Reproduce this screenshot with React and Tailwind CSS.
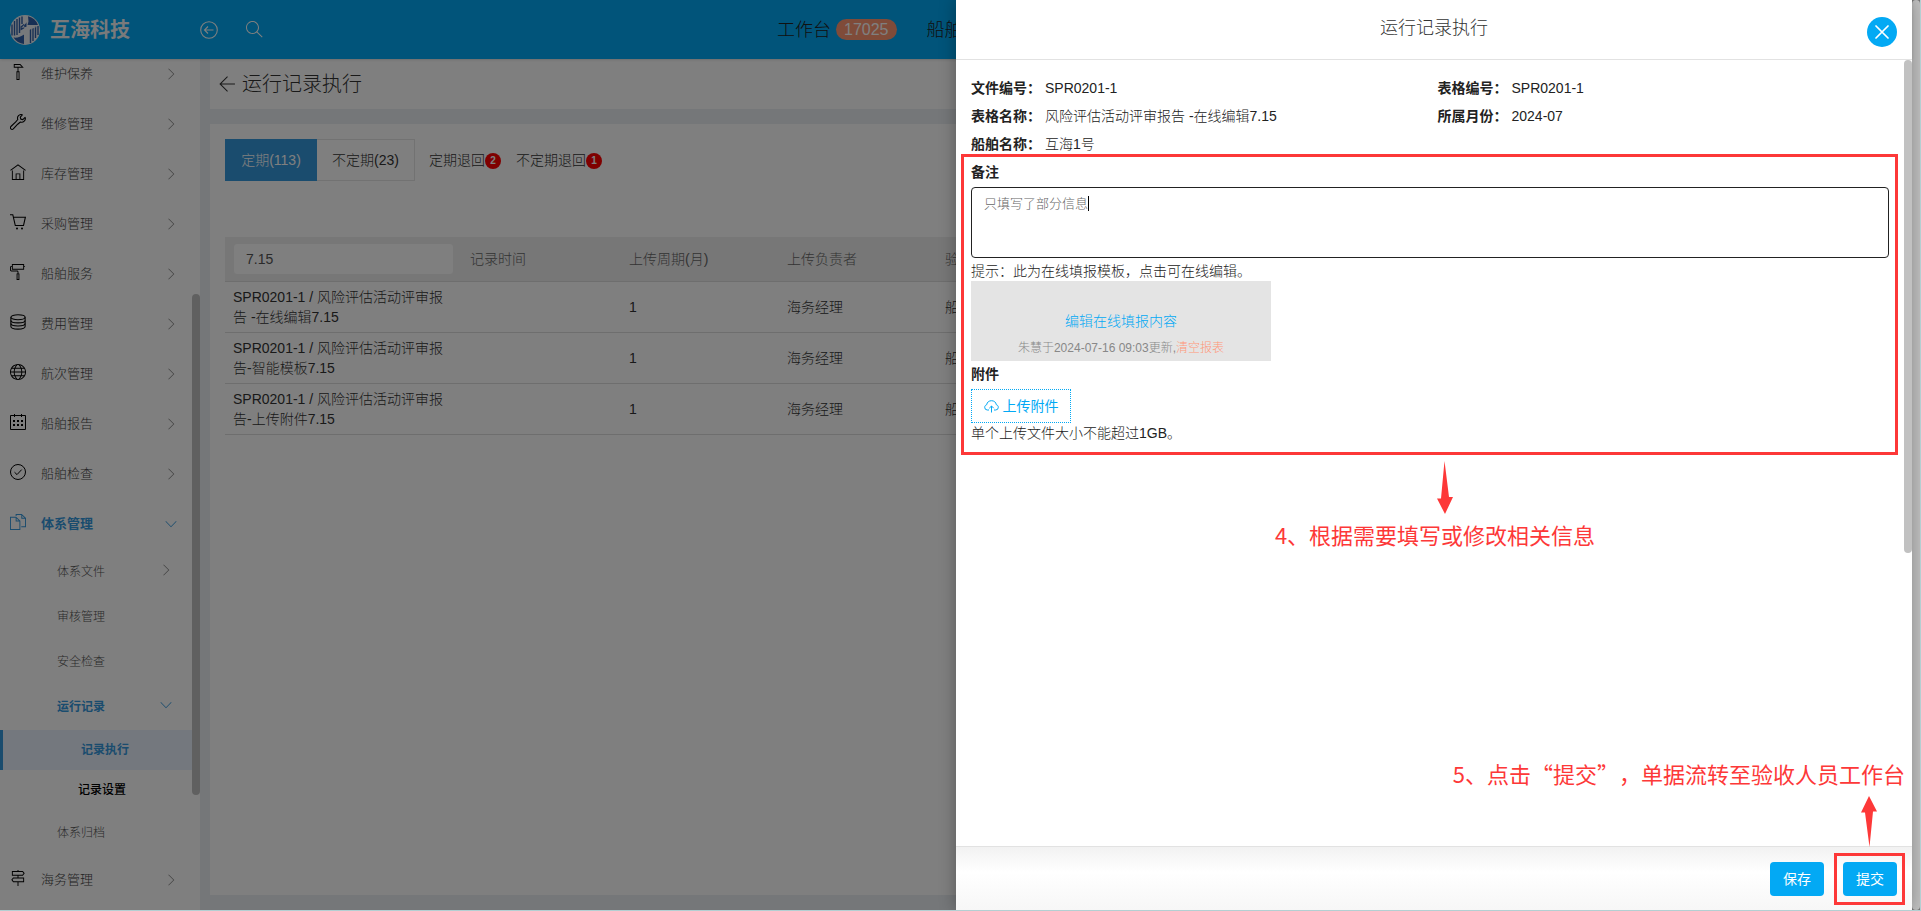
import {
  TfiAngleDown,
  TfiAngleRight,
  TfiArrowLeft,
  TfiDirectionAlt,
  TfiFiles,
  TfiHome,
  TfiHummer,
  TfiPaintRoller,
  TfiSearch,
  TfiWorld,
} from 'react-icons/tfi'

function CollapseIcon({ className }) {
  return (
    <svg className={className} viewBox="0 0 18 18" fill="none" stroke="currentColor" strokeWidth="1.1">
      <circle cx="9" cy="9" r="8.300" />
      <path d="M13.500 9h-9M8 5.500 4.500 9 8 12.500" />
    </svg>
  )
}

function WrenchIcon({ className }) {
  return (
    <svg className={className} viewBox="0 0 16 16" fill="none" stroke="currentColor" strokeWidth="1.1" strokeLinejoin="round">
      <path d="M12.300.8C11 .3 9.500.7 8.500 1.700c-1 1-1.200 2.500-.7 3.800L5.500 8.200.9 12.500c-.6.7-.6 1.700 0 2.400.7.700 1.700.7 2.400 0l4.400-4.700 2.700-2.200c1.300.5 2.800.2 3.800-.8 1-1 1.400-2.500.9-3.800l-2.300 2.200-2-.5-.5-2Z" />
    </svg>
  )
}

function CartIcon({ className }) {
  return (
    <svg className={className} viewBox="0 0 16 16" fill="none" stroke="currentColor" strokeWidth="1.1">
      <path d="M0 .7h2.800L5.300 11.500h8.200L15.400 3.200H3.500" />
      <circle cx="7" cy="14.500" r="1" fill="currentColor" stroke="none" />
      <circle cx="12" cy="14.500" r="1" fill="currentColor" stroke="none" />
    </svg>
  )
}

function CoinsIcon({ className }) {
  return (
    <svg className={className} viewBox="0 0 18 18" fill="none" stroke="currentColor" strokeWidth="1.2">
      <ellipse cx="9" cy="3.600" rx="8" ry="2.800" />
      <path d="M1 3.600v10.500c0 1.600 3.600 2.900 8 2.900s8-1.300 8-2.900V3.600" />
      <path d="M1 7.200C1 8.800 4.600 10 9 10s8-1.200 8-2.800M1 10.700c0 1.600 3.600 2.800 8 2.800s8-1.200 8-2.800" />
    </svg>
  )
}

function CalendarIcon({ className }) {
  return (
    <svg className={className} viewBox="0 0 16 16" fill="none" stroke="currentColor" strokeWidth="1">
      <path d="M.5 1.500h15v14H.5ZM4.500 0v3M11.500 0v3" />
      <path d="M3 7h2M7 7h2M11 7h2M3 11h2M7 11h2M11 11h2" strokeWidth="2" />
    </svg>
  )
}

function CheckCircleIcon({ className }) {
  return (
    <svg className={className} viewBox="0 0 16 16" fill="none" stroke="currentColor" strokeWidth="1">
      <circle cx="8" cy="8" r="7.500" />
      <path d="m4.500 8.200 2.500 2.400 4.700-5" />
    </svg>
  )
}

function CloudUploadIcon({ className }) {
  return (
    <svg className={className} viewBox="0 0 15 14" fill="none" stroke="currentColor" strokeWidth="1">
      <path d="M5 10.500H3.300A2.700 2.700 0 0 1 .7 7.800c0-1.300.9-2.300 2-2.600C3 2.700 5 1.200 7.500 1.200s4.500 1.500 4.800 4c1.200.3 2 1.300 2 2.600a2.700 2.700 0 0 1-2.600 2.700H10" />
      <path d="M7.500 13V6.500M5.300 8.700l2.200-2.200 2.200 2.200" />
    </svg>
  )
}

function Logo() {
  return (
    <svg className="size-[30px]" viewBox="0 0 30 30">
      <circle cx="15" cy="15" r="15" fill="#eef2f6" />
      <path d="M18 1.300A14 14 0 0 1 28 10H17.500l1-3.500L18 1.300Z" fill="#2f5fa8" />
      <path d="M14 28.900A14 14 0 0 1 3.500 22.500C7 23 11 22 14 19.500v9.400Z" fill="#2f5fa8" />
      <path d="M10.500 11.500 16.500 7v5l-6 3.500Z" fill="#2f5fa8" />
      <path
        d="M2 9.500v11M4.500 6v14.500M7 4v16M9.500 2.500V18M12 1.500V9M20.500 13v15M23 12v14M25.500 11.500V23M28 11v9"
        stroke="#2f5fa8"
        strokeWidth="1.400"
      />
      <path d="M13.500 1.500h3.200v6l-5.500 5.500 6.300-1.500h10L19 15l-3.500 4v9.500h-1V19l-6 1.500 6-5Z" fill="#eef2f6" />
    </svg>
  )
}

const MENU = [
  { label: '维护保养', icon: TfiHummer },
  { label: '维修管理', icon: WrenchIcon },
  { label: '库存管理', icon: TfiHome },
  { label: '采购管理', icon: CartIcon },
  { label: '船舶服务', icon: TfiPaintRoller },
  { label: '费用管理', icon: CoinsIcon },
  { label: '航次管理', icon: TfiWorld },
  { label: '船舶报告', icon: CalendarIcon },
  { label: '船舶检查', icon: CheckCircleIcon },
  { label: '体系管理', icon: TfiFiles, open: true },
]

const ROWS = [
  { id: 1, name: 'SPR0201-1 / 风险评估活动评审报告 -在线编辑7.15' },
  { id: 2, name: 'SPR0201-1 / 风险评估活动评审报告-智能模板7.15' },
  { id: 3, name: 'SPR0201-1 / 风险评估活动评审报告-上传附件7.15' },
]

const DETAILS = [
  { label: '文件编号：', value: 'SPR0201-1' },
  { label: '表格编号：', value: 'SPR0201-1' },
  { label: '表格名称：', value: '风险评估活动评审报告 -在线编辑7.15' },
  { label: '所属月份：', value: '2024-07' },
  { label: '船舶名称：', value: '互海1号' },
]

function MenuItem({ label, icon: Icon, open }) {
  return (
    <a
      href="#"
      className={`flex h-[50px] items-center pl-[10px] pr-[15px] text-[13px] ${open ? 'font-bold text-[#3598dc]' : 'text-[#444]'}`}
    >
      <Icon className={`mb-1 size-4 ${open ? '' : 'text-black'}`} />
      <span className="ml-[15px] flex-1">{label}</span>
      {open ? <TfiAngleDown className="size-3" /> : <TfiAngleRight className="size-3 text-[#888]" />}
    </a>
  )
}

function SubItem({ label, children, active }) {
  return (
    <a
      href="#"
      className={`flex h-[45px] items-center pl-[57px] pr-5 text-xs ${active ? 'font-bold text-[#3598dc]' : 'text-[#555]'}`}
    >
      <span className="flex-1">{label}</span>
      {children}
    </a>
  )
}

function Sidebar() {
  return (
    <aside className="flex w-[200px] shrink-0 overflow-hidden bg-white">
      <nav className="-mt-[10px] flex-1">
        {MENU.map((item) => (
          <MenuItem key={item.label} {...item} />
        ))}
        <SubItem label="体系文件">
          <TfiAngleRight className="mb-1 size-3 text-[#888]" />
        </SubItem>
        <SubItem label="审核管理" />
        <SubItem label="安全检查" />
        <SubItem label="运行记录" active>
          <TfiAngleDown className="mb-1 size-3" />
        </SubItem>
        <div className="mt-px">
          <a href="#" className="flex h-10 items-center border-l-3 border-[#3598dc] bg-[#e8f0fc] pl-[78px] text-xs font-bold text-[#3598dc]">
            记录执行
          </a>
          <a href="#" className="flex h-10 items-center pl-[78px] text-xs font-medium text-black">
            记录设置
          </a>
        </div>
        <SubItem label="体系归档" />
        <MenuItem label="海务管理" icon={TfiDirectionAlt} />
      </nav>
      <div className="w-2 pt-[235px]">
        <div className="h-[501px] rounded-full bg-[#c1c1c1]" />
      </div>
    </aside>
  )
}

function Header() {
  return (
    <header className="z-10 flex h-[59px] shrink-0 items-center overflow-hidden bg-[#03a9f4] shadow">
      <div className="flex w-[200px] shrink-0 items-center gap-[10px] pl-[10px]">
        <Logo />
        <span className="text-xl font-bold text-[#f2f4f6]">互海科技</span>
      </div>
      <button type="button" aria-label="收起">
        <CollapseIcon className="size-[18px] text-white" />
      </button>
      <button type="button" aria-label="搜索" className="ml-7">
        <TfiSearch className="size-[17px] text-white" />
      </button>
      <nav className="ml-[514px] flex items-center gap-[30px] whitespace-nowrap text-lg text-[#222]">
        <a href="#" className="flex items-center gap-[5px]">
          工作台
          <span className="flex h-[21px] items-center rounded-full bg-[#ff9672] px-2 text-base text-white">17025</span>
        </a>
        <a href="#">船舶</a>
      </nav>
    </header>
  )
}

function CountBadge({ children }) {
  return (
    <span className="mt-[2px] flex size-4 items-center justify-center rounded-full bg-[#ff0000] text-[10px] font-bold text-white">
      {children}
    </span>
  )
}

function RecordTable() {
  return (
    <table className="mt-14 w-full table-fixed text-left text-sm leading-5 text-[#333]">
      <colgroup>
        <col className="w-[237px]" />
        <col className="w-[159px]" />
        <col className="w-[158px]" />
        <col className="w-[158px]" />
        <col />
      </colgroup>
      <thead>
        <tr className="h-11 border-b border-[#dcdcdc] bg-[#eee] text-[#666]">
          <th className="px-2">
            <input
              type="text"
              aria-label="文件编号"
              defaultValue="7.15"
              className="block h-8 w-[221px] rounded border border-[#eee] bg-white px-3 text-sm font-light text-[#555]"
            />
          </th>
          <th className="px-2 font-light">记录时间</th>
          <th className="px-2 font-light">上传周期(月)</th>
          <th className="px-2 font-light">上传负责者</th>
          <th className="px-2 font-light">验收</th>
        </tr>
      </thead>
      <tbody>
        {ROWS.map((row) => (
          <tr key={row.id} className="border-b border-[#dcdcdc]">
            <td className="px-2 py-[5px]">{row.name}</td>
            <td className="px-2" />
            <td className="px-2">1</td>
            <td className="px-2">海务经理</td>
            <td className="px-2">船长</td>
          </tr>
        ))}
      </tbody>
    </table>
  )
}

function RecordPage() {
  return (
    <main className="flex min-w-0 flex-1 flex-col gap-[15px] bg-[#ebeef2] pb-[15px] pl-[10px] pr-[10px]">
      <div className="flex h-[50px] items-center gap-1.5 bg-white pl-2 text-xl text-[#333]">
        <TfiArrowLeft className="size-[18px]" />
        <h1>运行记录执行</h1>
      </div>
      <section className="flex-1 bg-white p-[15px]">
        <div className="flex h-[42px] text-sm text-[#333]">
          <button type="button" className="w-[92px] bg-[#3598dc] text-white">
            定期(113)
          </button>
          <button type="button" className="w-[98px] border border-l-0 border-[#e5e5e5]">
            不定期(23)
          </button>
          <button type="button" className="ml-[14px] flex items-center">
            定期退回
            <CountBadge>2</CountBadge>
          </button>
          <button type="button" className="ml-[15px] flex items-center">
            不定期退回
            <CountBadge>1</CountBadge>
          </button>
        </div>
        <RecordTable />
      </section>
    </main>
  )
}

function RemarkSection() {
  return (
    <section className="relative">
      <span className="pointer-events-none absolute -bottom-3 -left-[10px] -right-[9px] -top-1 border-3 border-[#fd3838]" />
      <label htmlFor="remark" className="block font-bold leading-7">
        备注
      </label>
      <div className="relative mt-px">
        <textarea
          id="remark"
          defaultValue="只填写了部分信息"
          className="block h-[71px] w-full resize-none rounded border border-[#222] px-3 py-1.5 text-[13px] leading-5 text-[#666] outline-none"
        />
        <span className="absolute left-[117px] top-[9px] h-[15px] w-px bg-black" />
      </div>
      <p className="pt-[3px] leading-5">提示：此为在线填报模板，点击可在线编辑。</p>
      <div className="flex h-20 w-[300px] flex-col items-center justify-end bg-[#e4e4e4]">
        <a href="#" className="leading-7 text-[#03a9f4]">
          编辑在线填报内容
        </a>
        <p className="text-xs leading-[26px] text-[#888]">
          朱慧于2024-07-16 09:03更新,
          <a href="#" className="text-[#ff9678]">
            清空报表
          </a>
        </p>
      </div>
      <h3 className="pb-[2px] font-bold leading-[26px]">附件</h3>
      <button
        type="button"
        className="flex h-[34px] w-[100px] items-center justify-center gap-1 border border-dotted border-[#03a9f4] font-normal text-[#03a9f4]"
      >
        <CloudUploadIcon className="size-[15px]" />
        上传附件
      </button>
      <p className="leading-5">单个上传文件大小不能超过1GB。</p>
    </section>
  )
}

function Drawer() {
  return (
    <div
      role="dialog"
      aria-label="运行记录执行"
      className="absolute inset-y-0 right-0 flex w-1/2 flex-col bg-white text-sm text-[#222] shadow-[0_0_16px_rgba(0,0,0,0.3)]"
    >
      <div className="relative flex h-[60px] shrink-0 items-center justify-center border-b border-[#e2e2e2] pb-[3px]">
        <h2 className="text-lg text-[#333]">运行记录执行</h2>
        <button
          type="button"
          aria-label="关闭"
          className="absolute right-[15px] top-[17px] flex size-[30px] items-center justify-center rounded-full bg-[#03a9f4]"
        >
          <svg className="size-[14px]" viewBox="0 0 14 14" stroke="#fff" strokeWidth="1.700" strokeLinecap="round">
            <path d="m1 1 12 12M13 1 1 13" />
          </svg>
        </button>
      </div>

      <div className="flex min-h-0 flex-1">
        <div className="flex-1 overflow-hidden px-[15px] pt-[14px]">
          <dl className="-mr-[15px] grid grid-cols-2">
            {DETAILS.map((d) => (
              <div key={d.label} className="flex h-7 items-center gap-1">
                <dt className="font-bold">{d.label}</dt>
                <dd>{d.value}</dd>
              </div>
            ))}
          </dl>
          <RemarkSection />
          <div className="mt-[18px] flex flex-col items-center pl-[10px] text-[#fd3838]">
            <svg className="ml-5 h-[53px] w-4" viewBox="0 0 16 53" fill="currentColor">
              <path d="M7.500 0 12 36h4L8 53 0 37.500h4Z" />
            </svg>
            <p className="font-['Noto_Sans_CJK_SC',sans-serif] text-[22px] font-normal leading-10 [text-spacing-trim:space-all]">
              4、根据需要填写或修改相关信息
            </p>
          </div>
        </div>
        <div className="w-2">
          <div className="h-[493px] rounded-full bg-[#c1c1c1]" />
        </div>
      </div>

      <div className="relative flex h-16 shrink-0 items-center justify-end gap-[19px] border-t border-[#e2e2e2] bg-linear-to-b from-[#f2f2f2] via-white via-40% to-[#f7f7f7] pr-[15px]">
        <div className="absolute bottom-full right-[7px] flex flex-col items-end text-[#fd3838]">
          <p className="whitespace-nowrap pb-[3px] font-['Noto_Sans_CJK_SC',sans-serif] text-[22px] font-normal leading-10 [text-spacing-trim:space-all]">
            5、点击“提交”，单据流转至验收人员工作台
          </p>
          <svg className="mr-7 h-[51px] w-4" viewBox="0 0 16 51" fill="currentColor">
            <path d="M8 0 16 15.500h-4L8.500 51 4 16.500H0Z" />
          </svg>
        </div>
        <button type="button" className="h-[34px] w-[54px] rounded bg-[#03a9f4] font-normal text-white">
          保存
        </button>
        <div className="relative">
          <span className="pointer-events-none absolute -inset-y-[9px] -left-[9px] -right-2 border-3 border-[#fd3838]" />
          <button type="button" className="h-[34px] w-[54px] rounded bg-[#03a9f4] font-normal text-white">
            提交
          </button>
        </div>
      </div>
    </div>
  )
}

export default function App() {
  return (
    <div
      lang="zh-CN"
      className="flex h-screen overflow-hidden border-b border-r border-[#b3cfd2] font-['Liberation_Sans','Noto_Sans_CJK_SC',sans-serif] font-light"
    >
      <div className="relative flex min-w-0 flex-1 flex-col">
        <Header />
        <div className="flex min-h-0 flex-1">
          <Sidebar />
          <RecordPage />
        </div>
        <div className="absolute inset-0 z-20 bg-black/50">
          <Drawer />
        </div>
      </div>
      <div className="w-2 shrink-0 bg-[#777]">
        <div className="h-full rounded-full bg-[#c1c1c1]" />
      </div>
    </div>
  )
}
